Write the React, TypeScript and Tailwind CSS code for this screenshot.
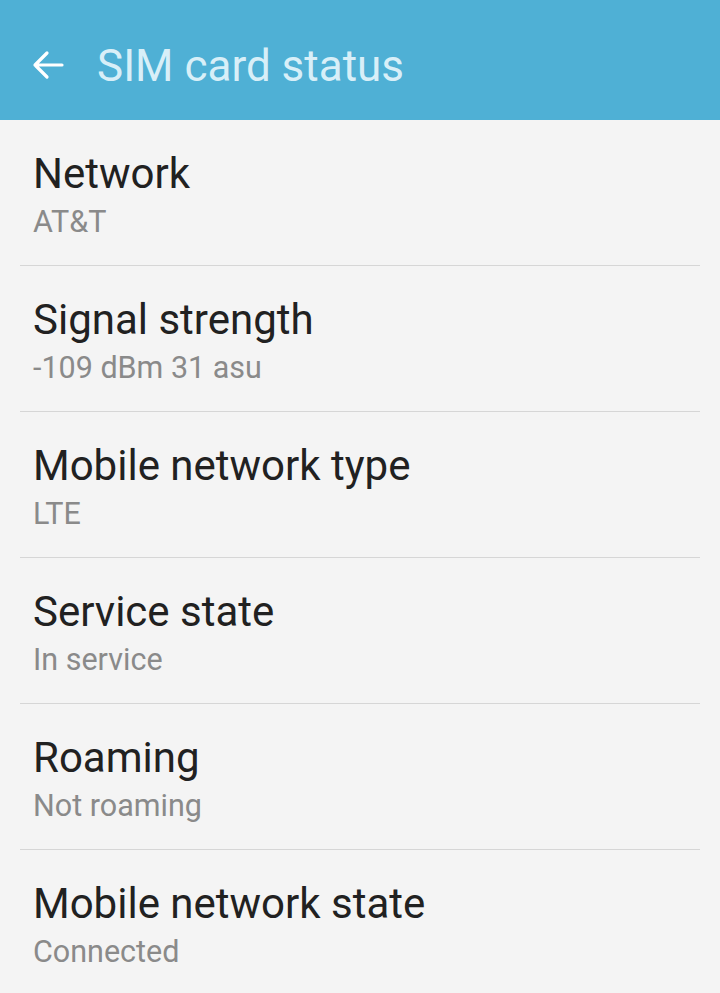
const items = [
  { title: "Network", value: "AT&T" },
  { title: "Signal strength", value: "-109 dBm 31 asu" },
  { title: "Mobile network type", value: "LTE" },
  { title: "Service state", value: "In service" },
  { title: "Roaming", value: "Not roaming" },
  { title: "Mobile network state", value: "Connected" },
];

export default function App() {
  return (
    <div className="w-[720px] h-[993px] overflow-hidden bg-[#f4f4f4] font-['Roboto',sans-serif]">
      {/* Action bar */}
      <div className="h-[120px] bg-[#4fb0d5] flex items-center">
        <svg className="ml-[32px] mt-[10px]" width="32" height="30" viewBox="0 0 32 30" fill="none">
          <path d="M30 15H3M15 3L3 15l12 12" stroke="#ffffff" strokeWidth="3.2" strokeLinecap="round" strokeLinejoin="round" />
        </svg>
        <span className="ml-[33px] mt-[11px] text-[44px] leading-[48px] text-[#d8eff8]">SIM card status</span>
      </div>

      <div>
        {items.map((item, i) => (
          <div key={item.title}>
            <div className="h-[145px] px-[33px] pt-[30px]">
              <div className="text-[42px] leading-[48px] text-[#212121]">{item.title}</div>
              <div className="mt-[6px] text-[30.5px] leading-[36px] text-[#8a8a8a]">{item.value}</div>
            </div>
            {i < items.length - 1 && <div className="mx-[20px] h-px bg-[#d6d6d6]" />}
          </div>
        ))}
      </div>
    </div>
  );
}
